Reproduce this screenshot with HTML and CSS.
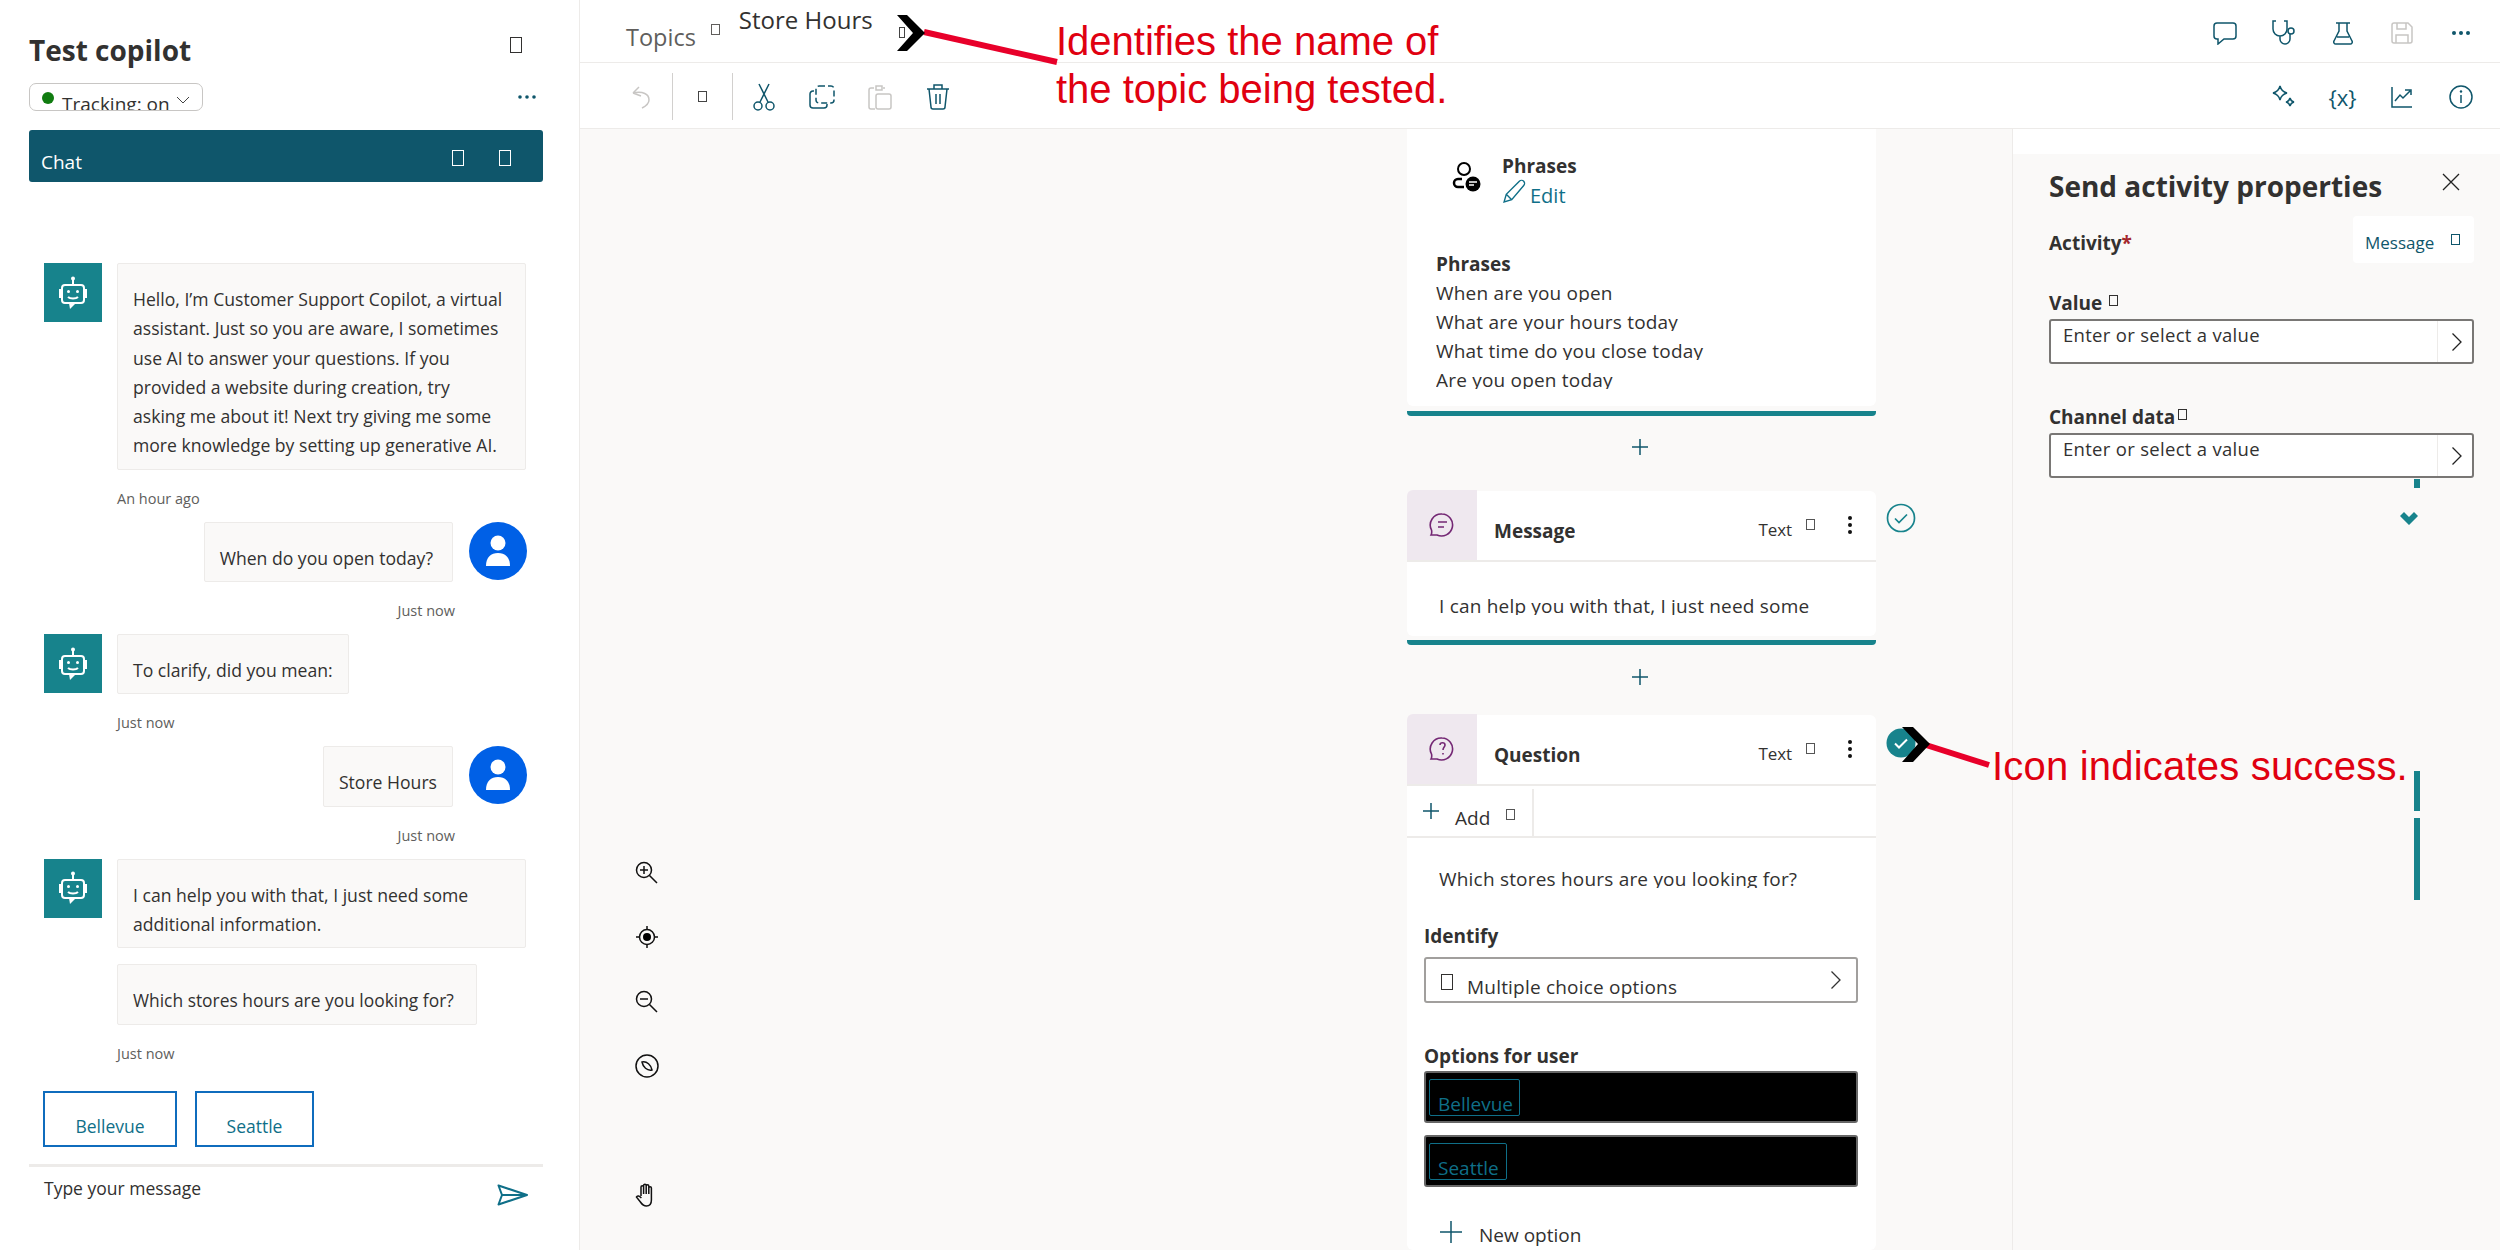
FILE: index.html
```html
<!doctype html>
<html>
<head>
<meta charset="utf-8">
<title>Test copilot</title>
<link rel="stylesheet" href="styles.css">
</head>
<body>
<div class="app">

<!-- test pane -->
<div class="pane">
	<div class="pane-title"><h1>Test copilot</h1><i class="tofu tofu-lg"></i></div>
	<div class="track-row">
		<div class="track"><b class="dot"></b><span class="track-txt">Tracking: on</span>
			<svg width="14" height="8" viewBox="0 0 14 8"><path d="M1 1l6 6 6-6" fill="none" stroke="#444" stroke-width="1"/></svg>
		</div>
		<svg class="more" width="20" height="6" viewBox="0 0 20 6"><g fill="#0f566b"><circle cx="3" cy="3" r="1.8"/><circle cx="10" cy="3" r="1.8"/><circle cx="17" cy="3" r="1.8"/></g></svg>
	</div>
	<div class="chat-bar"><span>Chat</span><i class="tofu tofu-lg"></i><i class="tofu tofu-lg"></i></div>

	<div class="log">
		<div class="msg">
			<div class="bot"><svg width="30" height="34" viewBox="0 0 30 34"><use href="#bot-ico"/></svg></div>
			<div class="bubble bubble-full">Hello, I’m Customer Support Copilot, a virtual<br>assistant. Just so you are aware, I sometimes<br>use AI to answer your questions. If you<br>provided a website during creation, try<br>asking me about it! Next try giving me some<br>more knowledge by setting up generative AI.</div>
		</div>
		<div class="stamp">An hour ago</div>

		<div class="msg msg-me">
			<div class="bubble bubble-when">When do you open today?</div>
			<div class="me"><svg width="26" height="32" viewBox="0 0 26 32"><use href="#me-ico"/></svg></div>
		</div>
		<div class="stamp stamp-me">Just now</div>

		<div class="msg">
			<div class="bot"><svg width="30" height="34" viewBox="0 0 30 34"><use href="#bot-ico"/></svg></div>
			<div class="bubble">To clarify, did you mean:</div>
		</div>
		<div class="stamp">Just now</div>

		<div class="msg msg-me">
			<div class="bubble">Store Hours</div>
			<div class="me"><svg width="26" height="32" viewBox="0 0 26 32"><use href="#me-ico"/></svg></div>
		</div>
		<div class="stamp stamp-me">Just now</div>

		<div class="msg">
			<div class="bot"><svg width="30" height="34" viewBox="0 0 30 34"><use href="#bot-ico"/></svg></div>
			<div class="bubble bubble-full">I can help you with that, I just need some additional information.</div>
		</div>
		<div class="msg msg-next">
			<div class="bubble bubble-q">Which stores hours are you looking for?</div>
		</div>
		<div class="stamp">Just now</div>

		<div class="choices"><a class="choice c1">Bellevue</a><a class="choice c2">Seattle</a></div>
	</div>

	<div class="composer">
		<span>Type your message</span>
		<svg width="32" height="22" viewBox="0 0 32 22"><path d="M1.5 1.5L30 11 1.5 20.500 5 11zM5 11h25" fill="none" stroke="#0f6f88" stroke-width="2" stroke-linejoin="round"/></svg>
	</div>
</div>

<!-- editor -->
<div class="main">
	<div class="topbar">
		<span class="crumb">Topics</span><i class="tofu tofu-sm"></i>
		<span class="crumb-cur">Store Hours</span><i class="tofu tofu-crumb"></i>
		<div class="tools">
			<span class="tool"><svg width="24" height="24" viewBox="0 0 24 24"><path d="M4 2h16a3 3 0 0 1 3 3v10a3 3 0 0 1-3 3h-9l-6 5v-5H4a3 3 0 0 1-3-3V5a3 3 0 0 1 3-3z" class="ln"/></svg></span>
			<span class="tool"><svg width="26" height="26" viewBox="0 0 26 26"><path d="M5 1H2v8a7 7 0 0 0 14 0V1h-3M9 16v3a5 5 0 0 0 10 0v-5" class="ln"/><circle cx="20" cy="11" r="3" class="ln"/></svg></span>
			<span class="tool"><svg width="20" height="24" viewBox="0 0 20 24"><path d="M3 2h14M6 2v8L1 20a2 2 0 0 0 2 3h14a2 2 0 0 0 2-3l-5-10V2M4 16h12" class="ln"/></svg></span>
			<span class="tool"><svg width="22" height="22" viewBox="0 0 22 22"><path d="M3 1h14l4 4v14a2 2 0 0 1-2 2H3a2 2 0 0 1-2-2V3a2 2 0 0 1 2-2zM6 1v6h9V1M5 21v-8h12v8" class="ln ln-off"/></svg></span>
			<span class="tool"><svg width="20" height="6" viewBox="0 0 20 6"><g fill="#0f566b"><circle cx="3" cy="3" r="2"/><circle cx="10" cy="3" r="2"/><circle cx="17" cy="3" r="2"/></g></svg></span>
		</div>
	</div>
	<div class="toolbar">
		<span class="cell cell-a"><svg width="20" height="24" viewBox="0 0 20 24"><path d="M2 8l6-6M2 8l8 3M2 8c10-2 16 1 16 7 0 3-3 6-7 8" class="ln ln-off"/></svg></span>
		<span class="cell cell-b"><i class="tofu tofu-sm"></i></span>
		<span class="cell"><svg width="24" height="28" viewBox="0 0 24 28"><circle cx="6" cy="23" r="4" class="ln"/><circle cx="18" cy="23" r="4" class="ln"/><path d="M8 19L17 1M16 19L7 1" class="ln"/></svg></span>
		<span class="cell"><svg width="26" height="24" viewBox="0 0 26 24"><path d="M5 6H4a3 3 0 0 0-3 3v11a3 3 0 0 0 3 3h11a3 3 0 0 0 3-3v-1" class="ln"/><rect x="7" y="1" width="18" height="17" rx="3" class="ln" stroke-dasharray="6 3"/></svg></span>
		<span class="cell"><svg width="24" height="26" viewBox="0 0 24 26"><path d="M6 4H3a2 2 0 0 0-2 2v17a2 2 0 0 0 2 2h4M17 4h-2M8 2h6v4H8zM10 10h11a2 2 0 0 1 2 2v11a2 2 0 0 1-2 2H10a2 2 0 0 1-2-2V12a2 2 0 0 1 2-2z" class="ln ln-off"/></svg></span>
		<span class="cell"><svg width="24" height="26" viewBox="0 0 24 26"><path d="M1 5h22M8 5V1h8v4M3 5l2 18a2 2 0 0 0 2 2h10a2 2 0 0 0 2-2l2-18M10 10v10M14 10v10" class="ln"/></svg></span>
		<div class="tools">
			<span class="tool"><svg width="24" height="24" viewBox="0 0 24 24"><path d="M8 1c1 4 3 6 7 7-4 1-6 3-7 7-1-4-3-6-7-7 4-1 6-3 7-7zM18 13c.6 2.400 1.600 3.400 4 4-2.400.6-3.400 1.600-4 4-.6-2.400-1.600-3.400-4-4 2.400-.6 3.400-1.600 4-4z" class="ln"/></svg></span>
			<span class="tool tool-x">{x}</span>
			<span class="tool"><svg width="22" height="22" viewBox="0 0 22 22"><path d="M1 1v20h20M4 15l5-6 3 3 7-7M14 4h6v5" class="ln"/></svg></span>
			<span class="tool"><svg width="24" height="24" viewBox="0 0 24 24"><circle cx="12" cy="12" r="11" class="ln"/><path d="M12 10v8" class="ln"/><circle cx="12" cy="6.500" r="1.200" fill="#0f566b"/></svg></span>
		</div>
	</div>

	<div class="body">
		<div class="canvas">
			<div class="zoom-tools">
				<svg width="24" height="24" viewBox="0 0 24 24"><circle cx="9" cy="9" r="7.500" class="blk"/><path d="M5 9h8M9 5v8M14.500 14.500L22 22" class="blk"/></svg>
				<svg width="24" height="24" viewBox="0 0 24 24"><circle cx="12" cy="12" r="7.500" class="blk"/><circle cx="12" cy="12" r="4" fill="#000"/><path d="M12 1v3M12 20v3M1 12h3M20 12h3" class="blk"/></svg>
				<svg width="24" height="24" viewBox="0 0 24 24"><circle cx="9" cy="9" r="7.500" class="blk"/><path d="M5 9h8M14.500 14.500L22 22" class="blk"/></svg>
				<svg width="24" height="24" viewBox="0 0 24 24"><circle cx="12" cy="12" r="11" class="blk"/><path d="M7 8c5-1 9 3 10 8-5 1-9-3-10-8z" class="blk"/></svg>
				<svg class="hand" width="22" height="24" viewBox="0 0 22 24"><path d="M6 13V4a1.300 1.300 0 0 1 2.600 0M8.600 11V2.500a1.300 1.300 0 0 1 2.600 0V11M11.200 3a1.300 1.300 0 0 1 2.600 0v8M13.800 5a1.300 1.300 0 0 1 2.600 0v12c0 4-2 6-5 6-3 0-4-1-6-4l-4-5c1-2 3-1 5 1" class="blk"/></svg>
			</div>

			<div class="flow">
				<div class="card">
					<div class="trig-head">
						<svg width="30" height="30" viewBox="0 0 30 30"><circle cx="12" cy="7" r="6" fill="none" stroke="#000" stroke-width="2"/><path d="M10 17H6a4 4 0 0 0 0 8h6" fill="none" stroke="#000" stroke-width="2.500"/><circle cx="21" cy="22" r="7.500" fill="#000"/><path d="M17 20h8M17 23h5" stroke="#fff" stroke-width="1.500"/></svg>
						<div>
							<div class="trig-name">Phrases</div>
							<div class="trig-edit"><svg width="24" height="24" viewBox="0 0 22 22"><path d="M1 21l2-7L15 2c1-1 3-1 4 0s1 3 0 4L8 19zM3 14l5 5" fill="none" stroke="#0f6f88" stroke-width="1.300"/></svg>Edit</div>
						</div>
					</div>
					<div class="phrases">
						<div class="lbl">Phrases</div>
						<div class="clip">When are you open</div>
						<div class="clip">What are your hours today</div>
						<div class="clip">What time do you close today</div>
						<div class="clip">Are you open today</div>
					</div>
				</div>
				<div class="card-bar"></div>
				<div class="adder adder-a"><svg width="18" height="18" viewBox="0 0 18 18"><path d="M9 1v16M1 9h16" class="ln"/></svg></div>

				<div class="node">
					<div class="card card-node">
						<div class="node-head">
							<span class="node-ico"><svg width="26" height="26" viewBox="0 0 26 26"><use href="#say-ico"/><path d="M9 10h9M9 15h6" class="pur"/></svg></span>
							<span class="node-name">Message</span>
							<span class="node-kind">Text</span><i class="tofu tofu-sm"></i>
							<svg class="kebab" width="6" height="20" viewBox="0 0 6 20"><g fill="#111"><circle cx="3" cy="3" r="2"/><circle cx="3" cy="10" r="2"/><circle cx="3" cy="17" r="2"/></g></svg>
						</div>
						<div class="clip node-text">I can help you with that, I just need some</div>
					</div>
					<svg class="status" width="30" height="30" viewBox="0 0 30 30"><circle cx="15" cy="15" r="13.500" fill="none" stroke="#17838c" stroke-width="1.700"/><path d="M9 15.500l4 4 8-8" fill="none" stroke="#17838c" stroke-width="1.700"/></svg>
				</div>
				<div class="card-bar bar-b"></div>
				<div class="adder adder-b"><svg width="18" height="18" viewBox="0 0 18 18"><path d="M9 1v16M1 9h16" class="ln"/></svg></div>

				<div class="node node-q">
					<div class="card card-node card-q">
						<div class="node-head">
							<span class="node-ico"><svg width="26" height="26" viewBox="0 0 26 26"><use href="#say-ico"/><path d="M11 9c0-3 5-3 5 0 0 2-2 2-2 5M14 17v1.500" class="pur"/></svg></span>
							<span class="node-name">Question</span>
							<span class="node-kind">Text</span><i class="tofu tofu-sm"></i>
							<svg class="kebab" width="6" height="20" viewBox="0 0 6 20"><g fill="#111"><circle cx="3" cy="3" r="2"/><circle cx="3" cy="10" r="2"/><circle cx="3" cy="17" r="2"/></g></svg>
						</div>
						<div class="add-row">
							<div class="add-cell"><svg width="18" height="18" viewBox="0 0 18 18"><path d="M9 1v16M1 9h16" class="ln"/></svg><span>Add</span><i class="tofu tofu-sm"></i></div>
						</div>
						<div class="clip node-text">Which stores hours are you looking for?</div>
						<div class="lbl q-lbl">Identify</div>
						<div class="picker">
							<i class="tofu tofu-lg"></i><span class="clip-sel">Multiple choice options</span>
							<svg width="12" height="20" viewBox="0 0 12 20"><path d="M1.500 1.500L10 10l-8.500 8.500" fill="none" stroke="#333" stroke-width="1.300"/></svg>
						</div>
						<div class="lbl q-lbl q-lbl2">Options for user</div>
						<div class="opt"><span class="tag">Bellevue</span></div>
						<div class="opt"><span class="tag tag-s">Seattle</span></div>
						<div class="new-opt"><svg width="22" height="22" viewBox="0 0 22 22"><path d="M11 0v22M0 11h22" class="ln"/></svg><span>New option</span></div>
					</div>
					<svg class="status" width="30" height="30" viewBox="0 0 30 30"><circle cx="15" cy="15" r="14.500" fill="#17838c"/><path d="M9 15.500l4 4 8-8" fill="none" stroke="#fff" stroke-width="2"/></svg>
				</div>
			</div>
		</div>

		<div class="props">
			<div class="props-cap"></div>
			<div class="props-in">
				<div class="props-head"><h2>Send activity properties</h2>
					<svg width="20" height="20" viewBox="0 0 20 20"><path d="M2 2l16 16M18 2L2 18" stroke="#222" stroke-width="1.300"/></svg>
				</div>
				<div class="act-row">
					<div class="lbl">Activity<span class="req">*</span></div>
					<div class="act-pick"><span>Message</span><i class="tofu tofu-sm"></i></div>
				</div>
				<div class="lbl field-lbl">Value <i class="tofu tofu-sm"></i></div>
				<div class="field"><span>Enter or select a value</span><b class="go"><svg width="12" height="20" viewBox="0 0 12 20"><path d="M1.500 1.500L10 10l-8.500 8.500" fill="none" stroke="#222" stroke-width="1.300"/></svg></b></div>
				<div class="lbl field-lbl field-lbl2">Channel data<i class="tofu tofu-sm"></i></div>
				<div class="field"><span>Enter or select a value</span><b class="go"><svg width="12" height="20" viewBox="0 0 12 20"><path d="M1.500 1.500L10 10l-8.500 8.500" fill="none" stroke="#222" stroke-width="1.300"/></svg></b></div>
			</div>
		</div>
	</div>
</div>
</div>

<!-- annotations drawn on top of the screenshot -->
<svg class="marks" width="2500" height="1250" viewBox="0 0 2500 1250">
	<rect x="2414" y="479" width="6" height="9" fill="#17838c"/>
	<path d="M2400 516l4-4 5 5 5-5 4 4-9 9z" fill="#17838c"/>
	<rect x="2414" y="771" width="6" height="40" fill="#17838c"/>
	<rect x="2414" y="818" width="6" height="82" fill="#17838c"/>
	<path d="M924 32L1057 62" stroke="#e8002a" stroke-width="6"/>
	<path d="M897 15h10l18 18-18 18h-10l16-18z" fill="#000"/>
	<path d="M1926 745L1989 765" stroke="#e8002a" stroke-width="6"/>
	<path d="M1902 727h11l17 17-17 18h-11l16-18z" fill="#000"/>
</svg>
<div class="note note-a">Identifies the name of<br>the topic being tested.</div>
<div class="note note-b">Icon indicates success.</div>

<svg width="0" height="0" class="defs">
	<symbol id="bot-ico" viewBox="0 0 30 34">
		<g fill="none" stroke="#fff" stroke-width="2"><rect x="4" y="9" width="22" height="18" rx="3"/><path d="M15 9V3M4 14H2v7h2M26 14h2v7h-2"/><path d="M10 21c2 2 8 2 10 0"/></g>
		<circle cx="15" cy="2.500" r="2" fill="#fff"/><circle cx="10.500" cy="15.500" r="1.500" fill="#fff"/><circle cx="19.500" cy="15.500" r="1.500" fill="#fff"/>
		<path d="M11 27h7l-6 6z" fill="#fff"/>
	</symbol>
	<symbol id="me-ico" viewBox="0 0 26 32">
		<circle cx="13" cy="8" r="7.500" fill="#fff"/><path d="M1 31c0-9 5-13 12-13s12 4 12 13z" fill="#fff"/>
	</symbol>
	<symbol id="say-ico" viewBox="0 0 26 26">
		<path d="M13 2a11 11 0 1 1-5 21H2c1-2 1-3 .5-5A11 11 0 0 1 13 2z" fill="none" stroke="#742774" stroke-width="1.600"/>
	</symbol>
</svg>
</body>
</html>
```

FILE: styles.css
```css
* {padding:0;margin:0;box-sizing:border-box;}
html,body {width:2500px;height:1250px;overflow:hidden;background:#fff;}
body {font-family:"Open Sans","Noto Sans",sans-serif;font-size:18px;color:#323130;position:relative;}
i {font-style:normal;}

.tofu {display:inline-block;flex:none;border:1px solid currentColor;}
.tofu-lg {width:12px;height:16px;}
.tofu-sm {width:9px;height:11px;}
.ln {fill:none;stroke:#0f566b;stroke-width:1.500;}
.ln-off {stroke:#c8c6c4;}
.blk {fill:none;stroke:#111;stroke-width:1.500;}
.pur {fill:none;stroke:#742774;stroke-width:1.600;}
.defs {position:absolute;}

.app {display:grid;grid-template-columns:580px 1920px;grid-template-rows:1250px;height:1250px;}

/* left pane */
.pane {border-right:1px solid #edebe9;display:flex;flex-direction:column;height:1250px;}
.pane-title {display:flex;align-items:center;justify-content:space-between;height:83px;padding:17px 57px 0 29px;}
.pane-title h1 {font-size:28px;font-weight:700;line-height:36px;}
.pane-title .tofu {margin-top:-10px;}
.track-row {display:flex;align-items:center;justify-content:space-between;height:28px;padding:0 42px 0 29px;}
.track {width:174px;height:28px;border:1px solid #c8c6c4;border-radius:7px;display:flex;align-items:flex-start;overflow:hidden;}
.dot {width:12px;height:12px;border-radius:50%;background:#107c10;margin:8px 0 0 12px;}
.track-txt {margin-left:8px;font-size:19px;line-height:40px;white-space:nowrap;}
.track svg {margin:12px 0 0 6px;}
.chat-bar {margin:19px 36px 0 29px;height:52px;background:#0f566b;border-radius:3px;color:#fff;display:flex;align-items:center;padding:12px 32px 0 12px;font-size:19px;}
.chat-bar span {margin-right:auto;}
.chat-bar .tofu {margin:-8px 0 0 35px;}

.log {padding-top:81px;flex:1;min-height:0;}
.msg {display:flex;align-items:flex-start;gap:15px;padding:0 53px 0 44px;}
.msg-me {justify-content:flex-end;gap:16px;padding:0 52px 0 0;}
.msg-next {padding-left:117px;margin-top:16px;}
.bubble {background:#faf9f8;border:1px solid #edebe9;border-radius:2px;max-width:410px;padding:21px 15px 8px;line-height:29.300px;font-size:17.600px;white-space:nowrap;}
.bubble-full {width:410px;white-space:normal;}
.bubble-when {padding-right:19px;}
.bubble-q {padding-right:22px;font-size:17.400px;}
.bot {width:58px;height:59px;background:#17838c;flex:none;display:flex;align-items:center;justify-content:center;}
.me {width:58px;height:58px;border-radius:50%;background:#0060e6;flex:none;display:flex;align-items:center;justify-content:center;}
.stamp {height:20px;line-height:20px;margin:19px 0 13px 117px;font-size:14.500px;color:#605e5c;}
.stamp-me {margin-left:0;margin-right:124px;text-align:right;}
.choices {display:flex;gap:18px;padding:14px 0 0 43px;}
.choice {height:56px;border:2px solid #0f6cbd;color:#0f6f88;text-align:center;line-height:66px;font-size:17.500px;overflow:hidden;}
.c1 {width:134px;}
.c2 {width:119px;}
.composer {margin:0 36px 0 29px;height:86px;border-top:3px solid #edebe9;display:flex;justify-content:space-between;align-items:flex-start;padding:9px 14px 0 15px;font-size:17.500px;}
.composer svg {margin-top:8px;}

/* top bars */
.main {display:flex;flex-direction:column;min-width:0;height:1250px;}
.topbar {height:63px;border-bottom:1px solid #edebe9;display:flex;align-items:center;padding:3px 10px 0 46px;}
.crumb {font-size:23.500px;color:#605e5c;margin-top:9px;}
.topbar .tofu-sm {margin:-6px 0 0 15px;color:#605e5c;}
.crumb-cur {font-size:24px;align-self:flex-start;margin:0 0 0 19px;line-height:34px;}
.topbar .tofu-crumb {width:6px;height:11px;margin:0 0 0 26px;color:#444;}
.tools {margin-left:auto;display:flex;align-items:center;}
.tool {width:59px;display:flex;justify-content:center;align-items:center;height:40px;}
.tool-x {font-size:22px;color:#0f566b;}
.toolbar {height:66px;border-bottom:1px solid #edebe9;display:flex;align-items:center;padding:2px 10px 0 33px;}
.cell {width:58px;height:47px;display:flex;align-items:center;justify-content:center;color:#444;}
.cell-a {width:60px;border-right:1px solid #d2d0ce;padding-right:3px;}
.cell-b {width:60px;border-right:1px solid #d2d0ce;}
.cell-b ~ .cell {position:relative;left:2px;}

/* canvas */
.body {flex:1;display:flex;min-height:0;}
.canvas {width:1433px;background:#faf9f8;border-right:1px solid #edebe9;position:relative;padding-left:827px;overflow:hidden;}
.zoom-tools {position:absolute;left:55px;top:732px;width:24px;display:flex;flex-direction:column;gap:40.300px;}
.zoom-tools svg {display:block;}
.zoom-tools .hand {margin-top:65px;}
.flow {width:469px;}
.card {background:#fff;border-radius:0 0 6px 6px;}
.card-node {border-radius:6px;}
.card-bar {height:5px;margin-top:5px;background:#17838c;border-radius:0 0 4px 4px;}
.bar-b {margin-top:4px;}
.adder {display:flex;justify-content:center;padding-right:3px;}
.adder-a {height:75px;padding-top:22px;}
.adder-b {height:70px;padding-top:23px;}

.trig-head {display:flex;gap:21px;padding:24px 0 0 45px;height:116px;}
.trig-head > svg {margin-top:9px;}
.trig-name {font-size:19px;font-weight:700;line-height:26px;margin-left:-1px;}
.trig-edit {display:flex;align-items:flex-end;gap:3px;color:#0f6f88;font-size:20px;line-height:28px;padding-left:0;}
.trig-edit svg {margin-bottom:7px;}
.phrases {padding:5px 0 20px 29px;height:161px;}
.lbl {font-weight:700;font-size:19px;line-height:29px;}
.clip {height:23px;line-height:29px;margin-bottom:6px;overflow:hidden;white-space:nowrap;font-size:19px;letter-spacing:.2px;}

.node {position:relative;}
.status {position:absolute;left:479px;top:12px;}
.node-q .status {top:13px;}
.node-head {height:71px;display:flex;align-items:center;border-bottom:2px solid #edebe9;}
.node-ico {width:70px;height:70px;background:#efe8ef;border-radius:6px 0 0 0;display:flex;align-items:center;justify-content:center;margin-bottom:1px;}
.node-name {font-weight:700;font-size:19px;margin:11px auto 0 17px;height:25px;line-height:25px;overflow:hidden;}
.node-kind {font-size:17px;margin:8px 0 0 0;letter-spacing:-.1px;}
.node-head .tofu {margin:-2px 0 0 14px;color:#555;}
.kebab {margin:-2px 23px 0 32px;}
.node-text {margin:30px 0 0 32px;height:23px;}
.card-node {height:145px;}
.card-q {height:535px;}
.add-row {height:52px;border-bottom:2px solid #edebe9;padding-top:3px;}
.add-cell {width:127px;height:47px;border-right:2px solid #edebe9;display:flex;align-items:center;padding-left:15px;}
.add-cell svg {margin-top:-4px;}
.add-cell span {margin:10px 16px 0 15px;font-size:19px;}
.add-cell .tofu {margin-top:3px;color:#555;}
.card-q .node-text {margin-top:27px;}
.q-lbl {margin:34px 0 0 17px;}
.q-lbl2 {margin:39px 0 0 17px;}
.card-q .clip {margin-bottom:6px;}
.picker {margin:6px 18px 0 17px;height:46px;border:2px solid #a19f9d;border-radius:3px;display:flex;align-items:center;padding:0 14px 0 15px;overflow:hidden;}
.picker .tofu {margin-top:4px;}
.clip-sel {margin:14px auto 0 14px;line-height:30px;letter-spacing:.2px;font-size:19px;}
.opt {margin:0 18px 12px 17px;height:52px;background:#000;border:2px solid #666;border-radius:3px;padding:6px 0 0 3px;}
.tag {display:block;width:91px;height:37px;border:1px solid #0f6f88;border-radius:2px;color:#0f6f88;line-height:48px;padding-left:8px;overflow:hidden;font-size:19px;}
.tag-s {width:78px;}
.new-opt {display:flex;align-items:flex-start;padding:22px 0 0 33px;}
.new-opt span {margin:0 0 0 17px;line-height:30px;position:relative;top:-1px;font-size:19px;}

/* properties */
.props {flex:1;background:#faf9f8;}
.props-cap {height:25px;background:#fff;}
.props-in {padding:0 26px 0 36px;}
.props-head {display:flex;justify-content:space-between;align-items:flex-start;height:62px;padding:13px 13px 0 0;}
.props-head h2 {font-size:28px;line-height:38px;font-weight:700;}
.props-head svg {margin-top:5px;}
.act-row {display:flex;justify-content:space-between;align-items:center;height:47px;}
.act-row .lbl {margin-top:8px;}
.req {color:#a4262c;}
.act-pick {width:121px;height:47px;background:#fff;border-radius:4px;display:flex;align-items:center;padding:6px 0 0 12px;color:#0f566b;font-size:17px;}
.act-pick .tofu {margin:-6px 0 0 17px;}
.field-lbl {margin-top:28px;line-height:24px;margin-bottom:4px;display:flex;align-items:center;}
.field-lbl .tofu {margin:-6px 0 0 7px;}
.field-lbl2 {margin-top:41px;}
.field-lbl2 .tofu {margin-left:3px;}
.field {height:45px;border:2px solid #797775;border-radius:3px;background:#fff;display:flex;line-height:28px;padding-left:12px;font-size:18.500px;}
.field span {flex:1;letter-spacing:.3px;}
.go {width:35px;border-left:1px solid #edebe9;display:flex;align-items:center;justify-content:center;padding-left:4px;}

/* annotations */
.marks {position:absolute;left:0;top:0;pointer-events:none;}
.note {position:absolute;font-family:"Liberation Sans",Arial,sans-serif;font-size:40px;line-height:48px;color:#e00010;white-space:nowrap;}
.note-a {left:1056px;top:17px;}
.note-b {left:1992px;top:742px;letter-spacing:.2px;}
```
